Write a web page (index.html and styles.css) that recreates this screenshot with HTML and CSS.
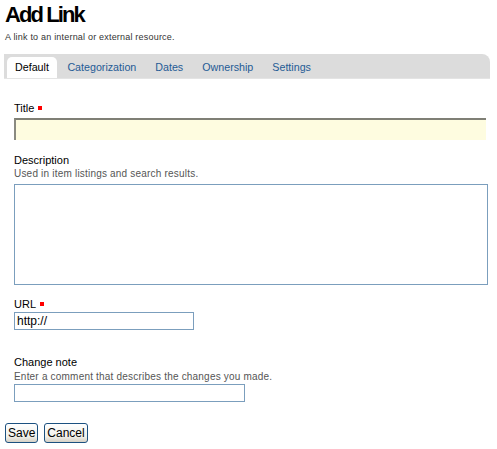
FILE: index.html
```html
<!DOCTYPE html>
<html>
<head>
<meta charset="utf-8">
<link rel="stylesheet" href="styles.css">
</head>
<body>
<h1 class="title">Add Link</h1>
<p class="subtitle">A link to an internal or external resource.</p>
<div class="tabs">
  <span class="tab active">Default</span>
  <span class="tab">Categorization</span>
  <span class="tab">Dates</span>
  <span class="tab">Ownership</span>
  <span class="tab">Settings</span>
</div>
<form class="form">
  <div class="field f-title">
    <label class="label">Title <span class="req"></span></label>
    <input class="input title-input" type="text">
  </div>
  <div class="field f-desc">
    <label class="label">Description</label>
    <div class="help">Used in item listings and search results.</div>
    <textarea class="textarea"></textarea>
  </div>
  <div class="field f-url">
    <label class="label">URL <span class="req"></span></label>
    <input class="input url-input" type="text" value="http://">
  </div>
  <div class="field f-note">
    <label class="label">Change note</label>
    <div class="help help-note">Enter a comment that describes the changes you made.</div>
    <input class="input note-input" type="text">
  </div>
  <div class="buttons">
    <button type="button" class="btn">Save</button>
    <button type="button" class="btn">Cancel</button>
  </div>
</form>
</body>
</html>
```
FILE: styles.css
```css
html, body {
  margin: 0;
  padding: 0;
  background: #fff;
}
body {
  padding: 0 4px 0 4px;
  font-family: "Liberation Sans", Arial, sans-serif;
  color: #000;
}
.title {
  margin: 0;
  padding-top: 2px;
  font-size: 22px;
  line-height: 26px;
  font-weight: bold;
  letter-spacing: -1.9px;
  height: 26px;
  padding-left: 1px;
}
.subtitle {
  margin: 3px 0 0 1px;
  font-size: 9px;
  line-height: 12px;
  color: #333;
  height: 12px;
  letter-spacing: 0.2px;
}
.tabs {
  margin-top: 11px;
  height: 25px;
  background: #dcdcdc;
  border-radius: 0 8px 0 0;
  display: flex;
  align-items: flex-end;
  padding-left: 3px;
  width: 486px;
  box-sizing: border-box;
  border-bottom: 1px solid #e4e4e4;
}
.tab {
  font-size: 10.7px;
  color: #1f5b95;
  padding: 0 9.5px;
  height: 21px;
  line-height: 20px;
}
.tab.active {
  background: #fff;
  color: #000;
  border-radius: 5px 5px 0 0;
  padding: 0 8px;
  margin-right: 1px;
}
.form {
  padding-left: 10px;
  margin: 0;
}
.label {
  display: block;
  font-size: 11px;
  line-height: 14px;
  color: #000;
}
.req {
  display: inline-block;
  width: 4px;
  height: 4px;
  background: #ff0000;
  vertical-align: 2px;
  margin-left: 1px;
}
.help {
  font-size: 10px;
  line-height: 14px;
  color: #555;
  letter-spacing: 0.2px;
}
.help-note {
  margin-top: 1px;
}
.field.f-title {
  margin-top: 22px;
}
.input, .textarea {
  display: block;
  box-sizing: border-box;
  margin: 0;
  font-family: "Liberation Sans", Arial, sans-serif;
  font-size: 12px;
  outline: none;
}
.title-input {
  margin-top: 3px;
  width: 472px;
  height: 22px;
  background: #fefce0;
  border: none;
  border-top: 2px solid #7f7f75;
  border-left: 2px solid #8a8a80;
}
.f-desc {
  margin-top: 13px;
}
.textarea {
  margin-top: 3px;
  width: 474px;
  height: 101px;
  border: 1px solid #7b9ebd;
  background: #fff;
  resize: none;
}
.f-url {
  margin-top: 12px;
}
.url-input {
  margin-top: 1px;
  width: 180px;
  height: 18px;
  border: 1px solid #7b9ebd;
  padding: 0 2px;
  color: #000;
}
.f-note {
  margin-top: 25px;
}
.note-input {
  margin-top: 0;
  width: 231px;
  height: 18px;
  border: 1px solid #7b9ebd;
}
.buttons {
  margin-left: -9px;
  margin-top: 21px;
  display: flex;
  gap: 6px;
}
.btn {
  font-family: "Liberation Sans", Arial, sans-serif;
  font-size: 12px;
  height: 20px;
  padding: 0 2px;
  border: 1px solid #1c5180;
  border-radius: 3px;
  background: linear-gradient(#ffffff, #f0f0ea 70%, #d6d0c5);
  color: #000;
}
```
